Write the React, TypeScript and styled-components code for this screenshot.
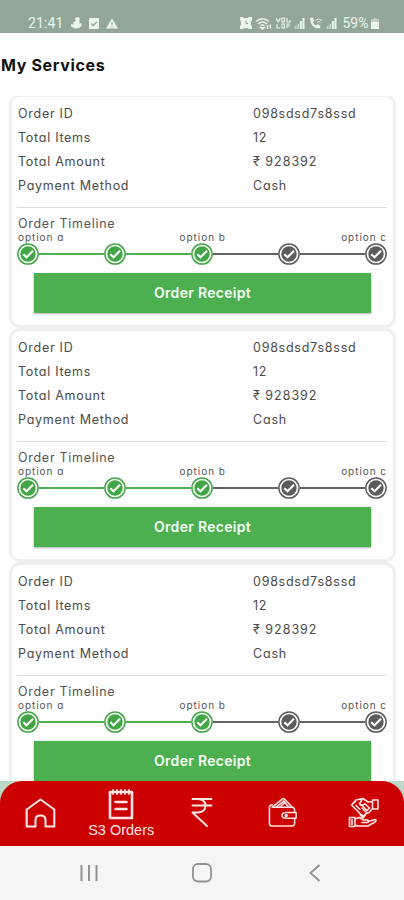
import React from 'react';
import styled, { createGlobalStyle } from 'styled-components';

const GlobalStyle = createGlobalStyle`
  * { box-sizing: border-box; }
  body { margin: 0; background: #fefefe; }
`;

const GREEN = '#4caf50';
const GREY = '#646264';

const Phone = styled.div`
  width: 404px;
  height: 900px;
  display: flex;
  flex-direction: column;
  overflow: hidden;
  background: #fefefe;
  font-family: Inter, 'Liberation Sans', sans-serif;
  font-feature-settings: 'cv11';
`;

const StatusBar = styled.header`
  height: 33px;
  flex: none;
  display: flex;
  justify-content: space-between;
  padding: 15px 25px 0 28px;
  background: #92a798;
  color: #eaf5ec;
  font: 14px/16px Roboto, sans-serif;
`;

const StatusGroup = styled.div<{ $gap: number }>`
  display: flex;
  align-items: center;
  height: 16px;
  gap: ${(p) => p.$gap}px;
`;

const Clock = styled.span`
  width: 36px;
  letter-spacing: 0.1px;
`;

const Battery = styled.span`
  margin: 0 -1px 0 2px;
`;

const Title = styled.h1`
  flex: none;
  height: 63px;
  margin: 0;
  padding: 22px 0 0 1px;
  font-size: 16px;
  line-height: 21px;
  font-weight: 700;
  letter-spacing: 0.65px;
  color: #111;
`;

const Scroller = styled.main`
  flex: none;
  height: 685px;
  overflow: hidden;
  padding: 0 8px 0 9px;
`;

const List = styled.div`
  margin-top: -2px;
`;

const Card = styled.section`
  height: 234px;
  padding: 4px 6px 0 5px;
  border: 3px solid #efefef;
  border-radius: 11px;
  background: #fefefe;
`;

const Row = styled.div`
  display: grid;
  grid-template-columns: 235px 1fr;
  height: 24.1px;
  padding-left: 1px;
  align-items: center;
  font-size: 12.5px;
  letter-spacing: 0.73px;
  color: #4b4b4b;
`;

const Value = styled.span<{ $spacing: number }>`
  letter-spacing: ${(p) => p.$spacing}px;
`;

const Divider = styled.div`
  height: 1px;
  margin: 9.6px 0 8px;
  background: #dedede;
`;

const Subtitle = styled.div`
  height: 15px;
  padding-left: 1px;
  font-size: 12.5px;
  line-height: 15px;
  letter-spacing: 0.72px;
  color: #555;
`;

const Labels = styled.div`
  display: flex;
  justify-content: space-between;
  height: 12px;
  padding-left: 1px;
  font-size: 10px;
  line-height: 13px;
  letter-spacing: 0.95px;
  color: #555;
`;

const Steps = styled.div`
  display: flex;
  align-items: center;
  height: 22px;
`;

const Connector = styled.div<{ $done: boolean }>`
  flex: 1;
  height: 2px;
  background: ${(p) => (p.$done ? GREEN : GREY)};
`;

const Receipt = styled.button`
  display: block;
  width: 337px;
  height: 40px;
  margin: 8px 0 0 17px;
  padding: 0;
  border: 0;
  background: ${GREEN};
  box-shadow: 0 1px 2px rgba(0, 0, 0, 0.3);
  color: #f5fff5;
  font: 600 14px/40px Inter, sans-serif;
  font-feature-settings: 'cv11';
  letter-spacing: 0.3px;
`;

const TabStrip = styled.div`
  flex: none;
  height: 65px;
  background: #bcd8c8;
`;

const Tabs = styled.nav`
  display: grid;
  grid-template-columns: repeat(5, 1fr);
  height: 65px;
  border-radius: 22px 22px 0 0;
  background: #cc0000;
  color: #ffe5e5;
`;

const Tab = styled.div<{ $active?: boolean }>`
  display: flex;
  flex-direction: column;
  align-items: center;
  justify-content: ${(p) => (p.$active ? 'flex-start' : 'center')};
  padding: ${(p) => (p.$active ? '7px 0 0' : '0 0 2px')};
  font: 14.5px/20px 'Liberation Sans', sans-serif;
  white-space: nowrap;
`;

const SystemBar = styled.footer`
  flex: none;
  height: 54px;
  display: flex;
  justify-content: space-between;
  align-items: center;
  padding: 0 78px;
  background: #f5f5f5;
`;

const Step = ({ done }: { done: boolean }) => {
  const color = done ? '#42a546' : '#5d5b5d';
  return (
    <svg width="22" height="22" viewBox="0 0 22 22">
      <circle cx="11" cy="11" r="10.1" fill="#fff" stroke={color} strokeWidth="1.5" />
      <circle cx="11" cy="11" r="7.7" fill={color} />
      <path d="M6.3 11.3l3.2 3L16 7.8" fill="none" stroke="#fff" strokeWidth="2.1" />
    </svg>
  );
};

const Bars = () => (
  <svg width="11" height="12" viewBox="0 0 10 12" fill="currentColor">
    <path opacity=".6" d="M0 9h2v3H0zM2.7 7h2v5h-2z" />
    <path d="M5.4 4h2v8h-2zM8 1h2v11H8z" />
  </svg>
);

const StatusIcons = () => (
  <StatusGroup $gap={3.5}>
    <svg width="12" height="12" viewBox="0 0 12 12">
      <path
        d="M0 0h3l1 1h4l1-1h3v3.5l-1 1V8l1 1v3H9l-1-.7H4L3 12H0V9l1-1V4.500l-1-1z"
        fill="currentColor"
      />
      <path d="M6 3.500v3h2" fill="none" stroke="#92a798" />
    </svg>
    <svg width="17" height="13" viewBox="0 0 17 13" fill="none" stroke="currentColor" strokeWidth="1.4">
      <path d="M1 4.500Q7.500-1 14 4.500M3 7q4.500-4 9 0M5.300 9q2.200-2 4.400 0M12.500 8v4M15.300 7.500v4" />
      <path d="M6 10.800h3L7.500 12z" fill="currentColor" />
    </svg>
    <svg width="15" height="12" viewBox="0 0 15 12" fill="none" stroke="currentColor" strokeWidth="1.1">
      <path d="M0 1l2.200 4L4.400 1M6 5V1h2.500v4zM11 1v4h3V3M1 7v4h3M6 7h2.500v4H6zM11 11V7h3M11 9h3" />
    </svg>
    <Bars />
    <svg width="14" height="12" viewBox="0 0 14 12" fill="currentColor">
      <path d="M1 1l3-.5L5.200 4 3.800 5.200Q5 7.500 7 8.400L8.500 7l3 1.700-.5 2.500Q2 12.500 1 1z" />
      <path d="M6.400 3.400q3-3 6.400 0M8 5.400q1.600-1.500 3.400 0" fill="none" stroke="currentColor" />
    </svg>
    <Bars />
    <Battery>59%</Battery>
    <svg width="8" height="11" viewBox="0 0 8 11" fill="currentColor">
      <path d="M2.500 0h3v1H8v10H0V1h2.500z" opacity=".5" />
      <path d="M0 4h8v7H0z" />
    </svg>
  </StatusGroup>
);

const labels: [string, string, number][] = [
  ['Order ID', '098sdsd7s8ssd', 0.75],
  ['Total Items', '12', 0.6],
  ['Total Amount', '₹ 928392', 1],
  ['Payment Method', 'Cash', 0.8],
];

const steps = [true, true, true, false, false];

const OrderCard = () => (
  <Card>
    {labels.map(([label, value, spacing]) => (
      <Row key={label}>
        <span>{label}</span>
        <Value $spacing={spacing}>{value}</Value>
      </Row>
    ))}
    <Divider />
    <Subtitle>Order Timeline</Subtitle>
    <Labels>
      <span>option a</span>
      <span>option b</span>
      <span>option c</span>
    </Labels>
    <Steps>
      {steps.map((done, i) => (
        <React.Fragment key={i}>
          {i > 0 && <Connector $done={done} />}
          <Step done={done} />
        </React.Fragment>
      ))}
    </Steps>
    <Receipt>Order Receipt</Receipt>
  </Card>
);

const iconProps = {
  fill: 'none',
  stroke: 'currentColor',
  strokeLinejoin: 'round' as const,
  strokeLinecap: 'round' as const,
};

export default function App() {
  return (
    <Phone>
      <GlobalStyle />
      <StatusBar>
        <StatusGroup $gap={7}>
          <Clock>21:41</Clock>
          <svg width="11" height="12" viewBox="0 0 11 12" fill="currentColor">
            <circle cx="6.500" cy="2.300" r="2.200" />
            <path d="M4.500 4h4v2.500l2-.5v3Q8 12 4 11.500L0 9.500V7l3 .5L2 5.500z" />
          </svg>
          <svg width="10" height="11" viewBox="0 0 10 11">
            <rect width="10" height="11" rx="1" fill="currentColor" />
            <path d="M2.300 5.500l2 2L8 3.700" fill="none" stroke="#92a798" strokeWidth="1.3" />
          </svg>
          <svg width="12" height="11" viewBox="0 0 13 11">
            <path d="M6.500 0L13 11H0z" fill="currentColor" />
            <path d="M6.500 4v3.500M6.500 8.500v1.200" stroke="#92a798" strokeWidth="1.2" />
          </svg>
        </StatusGroup>
        <StatusIcons />
      </StatusBar>
      <Title>My Services</Title>
      <Scroller>
        <List>
          <OrderCard />
          <OrderCard />
          <OrderCard />
        </List>
      </Scroller>
      <TabStrip>
        <Tabs>
          <Tab>
            <svg width="31" height="30" viewBox="0 0 30 30" {...iconProps} strokeWidth="2.1">
              <path d="M1.200 11.500L15 1.500l13.800 10V28.500H20V22q0-4.500-5-4.500T10 22v6.500H1.200z" />
            </svg>
          </Tab>
          <Tab $active>
            <svg width="26" height="32" viewBox="0 0 26 32" {...iconProps} strokeWidth="2.6">
              <path d="M2 4h22v26H2zM7.500 14h11M7.500 21h11" />
              <path d="M5 2v4M9 2v4M13 2v4M17 2v4M21 2v4" strokeWidth="1.8" />
            </svg>
            <span>S3 Orders</span>
          </Tab>
          <Tab>
            <svg width="22" height="31" viewBox="0 0 22 30" {...iconProps} strokeWidth="1.9">
              <path d="M1.500 1.500h19M1.500 8h19M1.500 1.500H7Q14.500 2 14.500 8.200T7 15H1.500L16 28.500" />
            </svg>
          </Tab>
          <Tab>
            <svg width="30" height="31" viewBox="0 0 30 32" {...iconProps} strokeWidth="1.6">
              <path d="M4 10.500L14.500 2q1-1 2 0l8 8.500M8 10.500l8-6.500M16 4.500l5 6M12 10.500l4-4" />
              <path d="M4 8Q1 8 1 11v16q0 3 3 3h19q4 0 4-3v-5M4 10.500h20q3 0 3 3V16M18 16h10.500v6H18q-4-.5-4-3t4-3z" />
              <circle cx="18.300" cy="19" r="1" />
            </svg>
          </Tab>
          <Tab>
            <svg width="31" height="31" viewBox="0 0 31 31" {...iconProps} strokeWidth="1.6">
              <path d="M24.500 3H30v9h-5.500zM24.500 4.500L20 5l-5-3.500L8 3 3.500 8l5 5 5 5 2 1 2.500-2.500 3-1 3.500-4M14 2.500L11.500 7l2 1.500L17 7l4.500 4-2 2M8 8.500l4 4M6 10.500l4 4M14 11l4 4M15 9.500l4 4M3.500 8L7.500 4.500M12 17.500l3 3.500 3-4" />
              <path d="M1.500 20.500H7v9H1.500zM7 22l4.500-1.500 4 2.500h4q2 1.500 0 2.500H14M20 24.500l7-2q2 .5 0 2.500l-7 4H9.500L7 28M4 22.500v5" />
            </svg>
          </Tab>
        </Tabs>
      </TabStrip>
      <SystemBar>
        <svg width="22" height="20" viewBox="0 0 22 20" fill="none" stroke="#919191" strokeWidth="2">
          <path d="M3.500 2v16M11 2v16M18.500 2v16" />
        </svg>
        <svg width="22" height="22" viewBox="0 0 22 22" fill="none" stroke="#919191" strokeWidth="1.8">
          <rect x="2" y="2" width="18" height="17.5" rx="5" />
        </svg>
        <svg width="22" height="20" viewBox="0 0 22 20" fill="none" stroke="#919191" strokeWidth="1.8">
          <path d="M15.500 2l-9 8 9 8" />
        </svg>
      </SystemBar>
    </Phone>
  );
}
